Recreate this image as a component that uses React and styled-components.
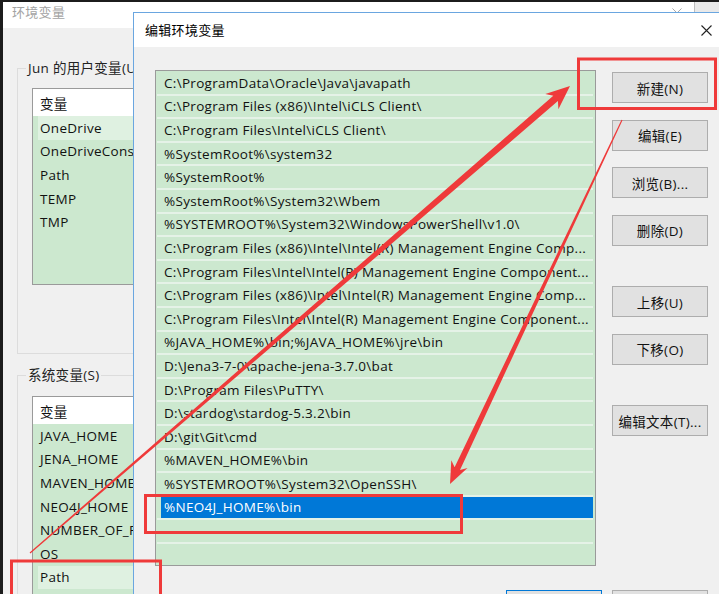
import styled, { createGlobalStyle } from 'styled-components';

const GlobalStyle = createGlobalStyle`
  html, body {
    margin: 0;
    padding: 0;
    overflow: hidden;
    background: #ececec;
  }
  body {
    font-family: "Open Sans", "Noto Sans CJK SC", sans-serif;
    font-size: 13.5px;
    letter-spacing: 0.3px;
    color: #111;
  }
`;

// desktop + windows
const Desktop = styled.div`
  position: relative;
  width: 719px;
  height: 594px;
  overflow: hidden;
  background: #e9e9e9;
  border-top: 2px solid #1c1c1c;
  border-left: 3px solid #1c1c1c;
  box-sizing: border-box;
`;

const Window = styled.div`
  position: absolute;
  left: ${p => p.$left}px;
  top: ${p => p.$top}px;
  width: ${p => p.$width}px;
  height: ${p => p.$height}px;
  background: #f0f0f0;
  display: flex;
  flex-direction: column;
  box-sizing: border-box;
  border: ${p => p.$active ? '1px solid #6aa6e0' : 'none'};
  border-right: ${p => p.$active ? '1px solid #6aa6e0' : '1px solid #bdbdbd'};
`;

const TitleBar = styled.div`
  height: ${p => p.$height}px;
  flex: 0 0 auto;
  background: #fff;
  display: flex;
  align-items: ${p => p.$align || 'center'};
  justify-content: space-between;
  padding-left: ${p => p.$pad}px;
  padding-right: ${p => p.$padRight}px;
  color: ${p => p.$active ? '#000' : '#a3a3a3'};
  font-size: 13px;
  box-sizing: border-box;
  line-height: 18px;
`;

const TitleText = styled.span`
  padding-top: ${p => p.$offset || 0}px;
`;

const CloseIcon = ({ color = '#222', size = 11 }) => (
  <svg width={size} height={size} viewBox="0 0 11 11">
    <path d="M0.5 0.5 L10.5 10.5 M10.5 0.5 L0.5 10.5" stroke={color} strokeWidth="1.1" fill="none" />
  </svg>
);

// background window parts
const BgBody = styled.div`
  padding: 0 14px 0 14px;
  display: flex;
  flex-direction: column;
`;

const GroupBox = styled.fieldset`
  margin: ${p => p.$top}px 0 0 0;
  padding: 0 0 ${p => p.$bottom}px 14px;
  border: 1px solid #dcdcdc;
  min-width: 0;
`;

const Legend = styled.legend`
  padding: 0 2px;
  margin-left: -6px;
  line-height: 18px;
  color: #222;
`;

const VarList = styled.div`
  margin-top: ${p => p.$gap}px;
  height: ${p => p.$height}px;
  border: 1px solid #9a9a9a;
  background: #cce8cf;
  box-sizing: border-box;
  overflow: hidden;
`;

const VarHeader = styled.div`
  height: 27px;
  background: #fff;
  padding-left: 7px;
  display: flex;
  align-items: center;
`;

const VarRow = styled.div`
  height: 23.6px;
  margin-left: 5px;
  padding-left: 2px;
  display: flex;
  align-items: center;
  white-space: nowrap;
  background: ${p => p.$hl ? '#dff1e1' : 'transparent'};
`;

// dialog parts
const DialogBody = styled.div`
  padding: 23px 24px 0 21px;
  display: flex;
  flex-direction: column;
  gap: 24px;
`;

const MainRow = styled.div`
  display: flex;
  gap: 16px;
`;

const PathList = styled.div`
  width: 441px;
  height: 496px;
  border: 1px solid #9a9a9a;
  background: #cce8cf;
  box-sizing: border-box;
  padding: 1px 2px 0 1px;
  overflow: hidden;
`;

const PathRow = styled.div`
  height: 23.6px;
  box-sizing: border-box;
  border-bottom: 2px solid #e5f2e7;
  padding-left: ${p => p.$selected ? 4 : 7}px;
  display: flex;
  align-items: stretch;
`;

const PathText = styled.div`
  flex: 1;
  display: flex;
  align-items: center;
  padding-left: ${p => p.$selected ? 3 : 0}px;
  white-space: nowrap;
  overflow: hidden;
  background: ${p => p.$selected ? '#0078d7' : 'transparent'};
  color: ${p => p.$selected ? '#fff' : '#111'};
`;

const ButtonColumn = styled.div`
  width: 96px;
  padding-top: 2px;
  display: flex;
  flex-direction: column;
  gap: 16.5px;
`;

const Button = styled.button`
  width: 96px;
  height: 31px;
  flex: 0 0 auto;
  margin-top: ${p => p.$spaced ? 24 : 0}px;
  background: #e1e1e1;
  border: 1px solid ${p => p.$primary ? '#0078d7' : '#adadad'};
  font: inherit;
  letter-spacing: inherit;
  color: #111;
  padding: 0;
`;

const Footer = styled.div`
  display: flex;
  justify-content: flex-end;
  gap: 10px;
`;

// annotations
const Overlay = styled.svg`
  position: absolute;
  left: -3px;
  top: -2px;
  pointer-events: none;
`;

const RED = '#ef3a3a';

const arrowPoints = (x1, y1, x2, y2, w0, w1, hl, hw) => {
  const len = Math.hypot(x2 - x1, y2 - y1);
  const ux = (x2 - x1) / len;
  const uy = (y2 - y1) / len;
  const nx = -uy;
  const ny = ux;
  const bx = x2 - ux * hl;
  const by = y2 - uy * hl;
  const nbx = x2 - ux * (hl - 5);
  const nby = y2 - uy * (hl - 5);
  const pts = [
    [x1 + nx * w0 / 2, y1 + ny * w0 / 2],
    [nbx + nx * w1 / 2, nby + ny * w1 / 2],
    [bx + nx * hw, by + ny * hw],
    [x2, y2],
    [bx - nx * hw, by - ny * hw],
    [nbx - nx * w1 / 2, nby - ny * w1 / 2],
    [x1 - nx * w0 / 2, y1 - ny * w0 / 2],
  ];
  return pts.map(p => p.map(v => v.toFixed(1)).join(',')).join(' ');
};

const userVars = ['OneDrive', 'OneDriveConsumer', 'Path', 'TEMP', 'TMP'];
const sysVars = ['JAVA_HOME', 'JENA_HOME', 'MAVEN_HOME', 'NEO4J_HOME', 'NUMBER_OF_PROCESSORS', 'OS', 'Path'];

const paths = [
  'C:\\ProgramData\\Oracle\\Java\\javapath',
  'C:\\Program Files (x86)\\Intel\\iCLS Client\\',
  'C:\\Program Files\\Intel\\iCLS Client\\',
  '%SystemRoot%\\system32',
  '%SystemRoot%',
  '%SystemRoot%\\System32\\Wbem',
  '%SYSTEMROOT%\\System32\\WindowsPowerShell\\v1.0\\',
  'C:\\Program Files (x86)\\Intel\\Intel(R) Management Engine Comp...',
  'C:\\Program Files\\Intel\\Intel(R) Management Engine Component...',
  'C:\\Program Files (x86)\\Intel\\Intel(R) Management Engine Comp...',
  'C:\\Program Files\\Intel\\Intel(R) Management Engine Component...',
  '%JAVA_HOME%\\bin;%JAVA_HOME%\\jre\\bin',
  'D:\\Jena3-7-0\\apache-jena-3.7.0\\bat',
  'D:\\Program Files\\PuTTY\\',
  'D:\\stardog\\stardog-5.3.2\\bin',
  'D:\\git\\Git\\cmd',
  '%MAVEN_HOME%\\bin',
  '%SYSTEMROOT%\\System32\\OpenSSH\\',
  '%NEO4J_HOME%\\bin',
  '',
];

const App = () => {
  return (
    <>
      <GlobalStyle />
      <Desktop>
        <Window $left={0} $top={0} $width={692} $height={620}>
          <TitleBar $height={26} $pad={9} $padRight={12} $align="flex-start">
            <TitleText $offset={1}>环境变量</TitleText>
            <TitleText $offset={2}><CloseIcon color="#a8a8a8" size={10} /></TitleText>
          </TitleBar>
          <BgBody>
            <GroupBox $top={31} $bottom={68}>
              <Legend>Jun 的用户变量(U)</Legend>
              <VarList $gap={11} $height={197}>
                <VarHeader>变量</VarHeader>
                {userVars.map((v, i) => (
                  <VarRow key={v} $hl={i === 0}>{v}</VarRow>
                ))}
              </VarList>
            </GroupBox>
            <GroupBox $top={12} $bottom={20}>
              <Legend>系统变量(S)</Legend>
              <VarList $gap={12} $height={230}>
                <VarHeader>变量</VarHeader>
                {sysVars.map((v, i) => (
                  <VarRow key={v + i} $hl={i === sysVars.length - 1}>{v}</VarRow>
                ))}
              </VarList>
            </GroupBox>
          </BgBody>
        </Window>

        <Window $left={130} $top={10} $width={600} $height={640} $active>
          <TitleBar $height={34} $pad={11} $padRight={20} $active>
            <span>编辑环境变量</span>
            <CloseIcon />
          </TitleBar>
          <DialogBody>
            <MainRow>
              <PathList>
                {paths.map((p, i) => (
                  <PathRow key={i} $selected={i === 18}>
                    <PathText $selected={i === 18}>{p}</PathText>
                  </PathRow>
                ))}
              </PathList>
              <ButtonColumn>
                <Button>新建(N)</Button>
                <Button>编辑(E)</Button>
                <Button>浏览(B)...</Button>
                <Button>删除(D)</Button>
                <Button $spaced>上移(U)</Button>
                <Button>下移(O)</Button>
                <Button $spaced>编辑文本(T)...</Button>
              </ButtonColumn>
            </MainRow>
            <Footer>
              <Button $primary>确定</Button>
              <Button>取消</Button>
            </Footer>
          </DialogBody>
        </Window>

        <Overlay width="719" height="594" viewBox="0 0 719 594">
          <rect x="578.5" y="59" width="137" height="49.5" fill="none" stroke={RED} strokeWidth="3" />
          <rect x="145.5" y="495.5" width="316" height="37" fill="none" stroke={RED} strokeWidth="3" />
          <rect x="11.5" y="561" width="149" height="60" fill="none" stroke={RED} strokeWidth="3" />
          <polygon points={arrowPoints(30, 553, 570, 86, 1.2, 7, 24, 10)} fill={RED} />
          <polygon points={arrowPoints(622, 120, 450, 484, 1.2, 6, 22, 9)} fill={RED} />
        </Overlay>
      </Desktop>
    </>
  );
};

export default App;
